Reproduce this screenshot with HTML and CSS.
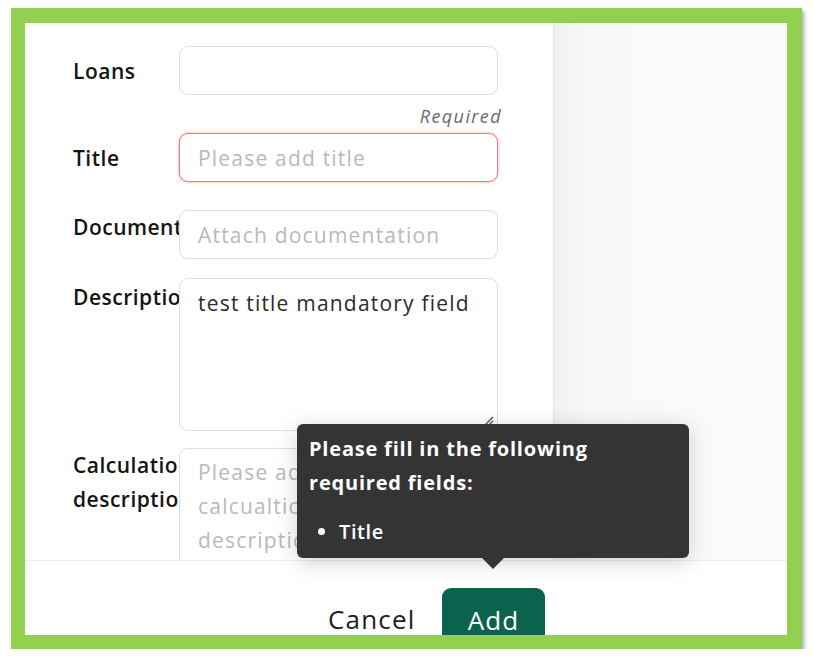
FILE: index.html
```html
<!DOCTYPE html>
<html lang="en">
<head>
<meta charset="utf-8">
<title>Add item</title>
<link rel="stylesheet" href="styles.css">
</head>
<body>
<div class="frame">
  <div class="app">
    <div class="main">
      <div class="form">
        <div class="row row-loans">
          <div class="label">Loans</div>
          <div class="field"></div>
        </div>
        <div class="hint">Required</div>
        <div class="row row-title">
          <div class="label">Title</div>
          <div class="field field-error"><span class="ph">Please add title</span></div>
        </div>
        <div class="row row-doc">
          <div class="label">Documentation</div>
          <div class="field"><span class="ph">Attach documentation</span></div>
        </div>
        <div class="row row-desc">
          <div class="label">Description</div>
          <div class="field area">
            <span class="val">test title mandatory field</span>
            <svg class="grip" width="12" height="12" viewBox="0 0 12 12"><path d="M2 11 L11 2 M6 11 L11 6" stroke="#555" stroke-width="1.4" fill="none"/></svg>
          </div>
        </div>
        <div class="row row-calc">
          <div class="label label-wrap">Calculation description</div>
          <div class="field area area-calc"><span class="ph">Please add<br>calcualtion<br>description</span></div>
        </div>
      </div>
      <div class="side"></div>
    </div>
    <div class="footer">
      <button class="btn-cancel">Cancel</button>
      <button class="btn-add">Add</button>
    </div>
    <div class="tooltip">
      <div class="tip-title">Please fill in the following required fields:</div>
      <ul class="tip-list"><li>Title</li></ul>
    </div>
  </div>
</div>
</body>
</html>
```

FILE: styles.css
```css
* { box-sizing: border-box; }
html, body { margin: 0; padding: 0; background: #ffffff; }
body { font-family: "Open Sans", "DejaVu Sans", sans-serif; color: #1a1a1a; }

.frame {
  margin: 8px 0 0 11px;
  width: 791px;
  height: 641px;
  border-style: solid;
  border-color: #92d050;
  border-width: 15px 15px 14px 14px;
  box-shadow: 2px 3px 4px rgba(0,0,0,0.35);
  background: #ffffff;
}
.app {
  position: relative;
  width: 100%;
  height: 100%;
  overflow: hidden;
  display: flex;
  flex-direction: column;
}
.main {
  flex: none;
  height: 537px;
  display: flex;
  overflow: hidden;
}
.form {
  width: 528px;
  padding: 23px 0 0 48px;
  background: #ffffff;
  overflow: hidden;
}
.side {
  flex: 1;
  background: linear-gradient(to right, #f1f1f1 0, #f9f9f9 40px, #fafafa 100%);
  border-left: 1px solid #e6e6e6;
}
.row { display: flex; }
.label {
  width: 106px;
  flex: none;
  font-size: 21px;
  font-weight: 600;
  letter-spacing: 0.5px;
  line-height: 34px;
  color: #141414;
  overflow: hidden;
  white-space: nowrap;
}
.row-loans, .row-title { align-items: center; }
.row-desc .label { margin-top: 2px; }
.label-wrap { white-space: normal; }
.field {
  position: relative;
  width: 319px;
  height: 49px;
  border: 1.5px solid #dedede;
  border-radius: 9px;
  padding: 0 18px;
  display: flex;
  align-items: center;
  font-size: 21px;
  letter-spacing: 1.2px;
  background: #fff;
  white-space: nowrap;
}
.field-error {
  border-color: #f07a7a;
  box-shadow: 0 0 3px rgba(240, 80, 80, 0.55);
}
.ph { color: #b9b9b9; line-height: 34px; }
.val { color: #2b2b2b; line-height: 34px; }
.hint {
  width: 429px;
  text-align: right;
  font-size: 18px;
  font-style: italic;
  letter-spacing: 1.4px;
  color: #6a6a6a;
  line-height: 24px;
  margin: 9px 0 5px;
}
.row-doc { margin-top: 28px; }
.row-desc { margin-top: 19px; }
.row-calc { margin-top: 17px; }
.area {
  height: 153px;
  align-items: flex-start;
  padding-top: 7px;
}
.area-calc { height: 150px; padding-top: 6px; }
.grip { position: absolute; right: 3px; bottom: 3px; }

.footer {
  flex: 1;
  border-top: 1px solid #ececec;
  display: flex;
  align-items: flex-start;
  padding: 27px 0 0 288px;
  background: #ffffff;
  overflow: hidden;
}
.btn-cancel {
  font-family: inherit;
  font-size: 26px;
  letter-spacing: 1.2px;
  color: #1e1e1e;
  background: none;
  border: none;
  padding: 14px 0 0 15px;
  width: 129px;
  text-align: left;
  line-height: 34px;
}
.btn-add {
  font-family: inherit;
  font-size: 26px;
  font-weight: 500;
  letter-spacing: 1px;
  color: #ffffff;
  background: #0b634e;
  border: none;
  border-radius: 9px;
  width: 103px;
  height: 64px;
  line-height: 34px;
  padding: 0;
}

.tooltip {
  position: absolute;
  left: 272px;
  top: 401px;
  width: 392px;
  height: 134px;
  background: #343434;
  border-radius: 6px;
  padding: 8px 12px 0 12px;
  color: #ffffff;
  box-shadow: 0 4px 22px rgba(0,0,0,0.18);
}
.tooltip::after {
  content: "";
  position: absolute;
  left: 185px;
  bottom: -11px;
  border-left: 11px solid transparent;
  border-right: 11px solid transparent;
  border-top: 11px solid #343434;
}
.tip-title {
  font-size: 20px;
  font-weight: 700;
  letter-spacing: 0.8px;
  line-height: 34px;
  width: 300px;
}
.tip-list {
  margin: 15px 0 0 0;
  padding: 0 0 0 30px;
  font-size: 20px;
  font-weight: 600;
  letter-spacing: 0.6px;
  line-height: 34px;
}
```
